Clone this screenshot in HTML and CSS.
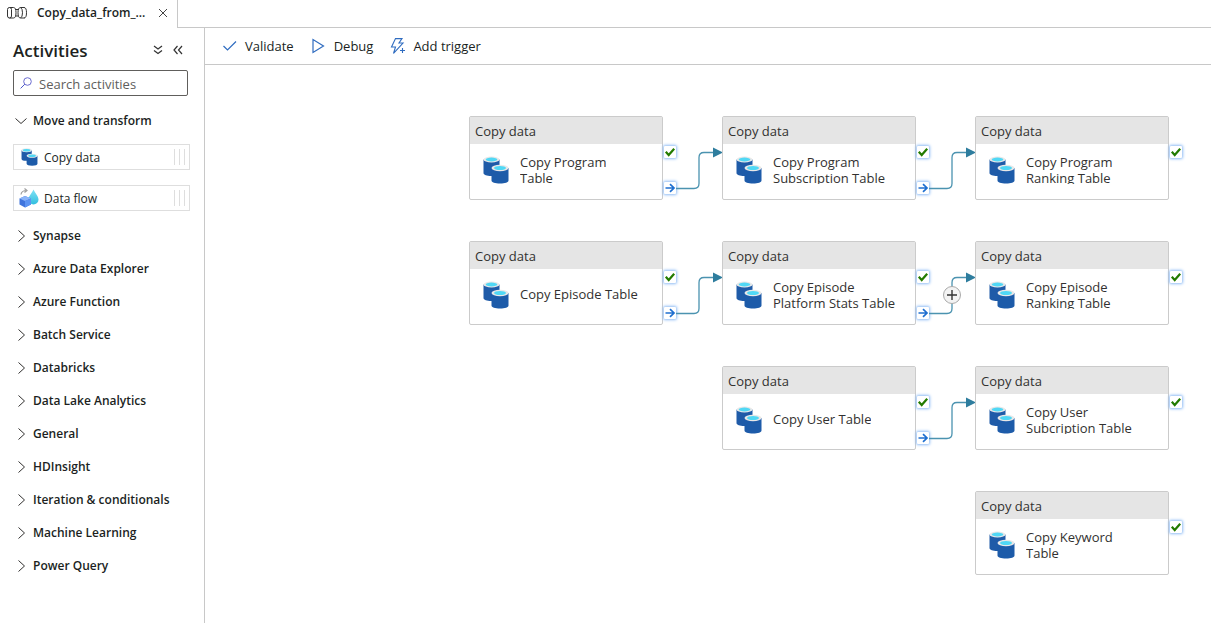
FILE: index.html
```html
<!DOCTYPE html>
<html lang="en">
<head>
<meta charset="utf-8">
<title>Copy_data_from_...</title>
<link rel="stylesheet" href="styles.css">
</head>
<body>
<svg class="sprite" aria-hidden="true">
  <defs>
    <linearGradient id="drop" x1="0" y1="0" x2="0" y2="1"><stop offset="0" stop-color="#7fe3f7"/><stop offset="1" stop-color="#32bedd"/></linearGradient>
    <symbol id="copy" viewBox="0 0 26 28">
      <path d="M0.500 3.500v13.500c0 2 3.500 3 7.500 3s8.500-1 8.500-3V3.500z" fill="#1f5ba8"/>
      <ellipse cx="8.500" cy="3.500" rx="8" ry="3" fill="#e8e8e8"/>
      <ellipse cx="8.500" cy="3.500" rx="5.800" ry="1.900" fill="#50d8f5"/>
      <path d="M8.500 12v12.500c0 2 3.500 3 8.500 3s8.500-1 8.500-3V12z" fill="#1d5ba9"/>
      <ellipse cx="17" cy="12" rx="8.500" ry="3.200" fill="#e8e8e8"/>
      <ellipse cx="17" cy="12" rx="6" ry="2" fill="#50d8f5"/>
    </symbol>
    <symbol id="right" viewBox="0 0 12 14"><path d="M2.500 1.500 8.500 7l-6 5.500" fill="none" stroke="#323130"/></symbol>
    <symbol id="tick" viewBox="0 0 12 12"><path d="M1.800 5.800 4.700 9 10.200 2.800" fill="none" stroke="#237b00" stroke-width="2.200"/></symbol>
    <symbol id="arrow" viewBox="0 0 12 12"><path d="M1.500 6h8.500M6 2.200l4 3.800-4 3.800" fill="none" stroke="#1f6fd0" stroke-width="1.700"/></symbol>
    <symbol id="link" viewBox="0 0 47 46"><path d="M0 41.500h18q5 0 5-5v-26q0-5 5-5h10" fill="none" stroke="#4b93b0" stroke-width="1.300"/><path d="M37 0.500 47 5.500 37 10.500z" fill="#2e7d9e"/></symbol>
  </defs>
</svg>
<div class="app">
  <header class="tabs">
    <div class="tab">
      <svg class="pipe" viewBox="0 0 20 14" fill="none" stroke="#333"><rect x="0.500" y="1.500" width="4" height="10.500" rx="2"/><path d="M2.500 1.500h4q2.500 0 2.500 5.250t-2.500 5.250h-4M8.500 3.500h3M8.500 10h3M17.500 1.500h-4q-2.500 0-2.500 5.250t2.500 5.250h4"/><path d="M13.500 1.500q2 1 2 5.250t-2 5.250M17 1.500q2.500 0 2.500 5.250t-2.500 5.250"/></svg>
      <span class="tab-name">Copy_data_from_...</span>
      <button class="icon-button" aria-label="Close tab"><svg class="close" viewBox="0 0 10 10"><path d="M1 1l8 8M9 1 1 9" stroke="#444" fill="none"/></svg></button>
    </div>
    <div class="tab-fill"></div>
  </header>
  <div class="workspace">
    <aside class="sidebar">
      <div class="side-head">
        <h1>Activities</h1>
        <button class="icon-button" aria-label="Expand all"><svg class="chevrons" viewBox="0 0 10 10"><path d="M1 1l4 3 4-3M1 5.500l4 3 4-3" fill="none" stroke="#333" stroke-width="1.200"/></svg></button>
        <button class="icon-button" aria-label="Collapse pane"><svg class="chevrons" viewBox="0 0 10 10"><path d="M4.500 1l-3.500 4 3.500 4M9 1 5.500 5 9 9" fill="none" stroke="#333" stroke-width="1.200"/></svg></button>
      </div>
      <label class="search">
        <svg class="glass" viewBox="0 0 12 12"><circle cx="7.500" cy="4.500" r="3.800" fill="none" stroke="#6b6bd0"/><path d="M4.800 7.200.6 11.400" stroke="#4a55c8"/></svg>
        <input type="search" placeholder="Search activities" aria-label="Search activities">
      </label>
      <button class="group" aria-expanded="true"><svg class="down" viewBox="0 0 14 8"><path d="M1.500 1.500 7 6.500l5.500-5" fill="none" stroke="#323130"/></svg>Move and transform</button>
      <ul class="cards">
        <li class="card"><svg class="card-icon" viewBox="0 0 26 28"><use href="#copy"/></svg><span>Copy data</span><i class="grip"></i></li>
        <li class="card"><svg class="card-icon wide" viewBox="0 0 20 20"><path d="M14.500 1.500c2.500 5 5 7 5 10a5 5 0 0 1-10 0c0-3 2.500-5 5-10z" fill="url(#drop)"/><path d="M.5 10.500 6 8l6 2.500v6L6 19.500l-5.500-3z" fill="#3f74dc"/><path d="M.5 10.500 6 8l6 2.500L6 13z" fill="#8bb5fa"/><path d="M6 13l6-2.500v6L6 19.500z" fill="#5b93f2"/><path d="M2 6.500q.5-4 5.500-4M5.500.5l2.500 2-2.500 2" fill="none" stroke="#a0a0a0" stroke-width="1.200"/></svg><span>Data flow</span><i class="grip"></i></li>
      </ul>
      <nav class="groups" aria-label="Activity groups">
        <button class="group"><svg class="chev"><use href="#right"/></svg>Synapse</button>
        <button class="group"><svg class="chev"><use href="#right"/></svg>Azure Data Explorer</button>
        <button class="group"><svg class="chev"><use href="#right"/></svg>Azure Function</button>
        <button class="group"><svg class="chev"><use href="#right"/></svg>Batch Service</button>
        <button class="group"><svg class="chev"><use href="#right"/></svg>Databricks</button>
        <button class="group"><svg class="chev"><use href="#right"/></svg>Data Lake Analytics</button>
        <button class="group"><svg class="chev"><use href="#right"/></svg>General</button>
        <button class="group"><svg class="chev"><use href="#right"/></svg>HDInsight</button>
        <button class="group"><svg class="chev"><use href="#right"/></svg>Iteration &amp; conditionals</button>
        <button class="group"><svg class="chev"><use href="#right"/></svg>Machine Learning</button>
        <button class="group"><svg class="chev"><use href="#right"/></svg>Power Query</button>
      </nav>
    </aside>
    <main class="main">
      <div class="toolbar">
        <button class="tool"><svg class="tool-icon" viewBox="0 0 16 16"><path d="M1.500 8l4 4 8.500-8.500" fill="none" stroke="#2f6cc0" stroke-width="1.200"/></svg>Validate</button>
        <button class="tool"><svg class="tool-icon" viewBox="0 0 16 16"><path d="M2 1.500v13L12.500 8z" fill="none" stroke="#2f6cc0" stroke-width="1.200"/></svg>Debug</button>
        <button class="tool"><svg class="tool-icon" viewBox="0 0 16 16"><path d="M5.500.6h6.500L9 5h4L3.500 15.400 5.500 9H1.500zM12.500 10v5M10 12.500h5" fill="none" stroke="#2f6cc0" stroke-width="1.100"/></svg>Add trigger</button>
      </div>
      <div class="canvas">
        <article class="node col-1 row-1"><h2>Copy data</h2><div class="node-body"><svg class="node-icon"><use href="#copy"/></svg><p>Copy Program<br>Table</p></div><svg class="port ok"><use href="#tick"/></svg><svg class="port out"><use href="#arrow"/></svg><svg class="link"><use href="#link"/></svg></article>
        <article class="node col-2 row-1"><h2>Copy data</h2><div class="node-body"><svg class="node-icon"><use href="#copy"/></svg><p>Copy Program Subscription Table</p></div><svg class="port ok"><use href="#tick"/></svg><svg class="port out"><use href="#arrow"/></svg><svg class="link"><use href="#link"/></svg></article>
        <article class="node col-3 row-1"><h2>Copy data</h2><div class="node-body"><svg class="node-icon"><use href="#copy"/></svg><p>Copy Program Ranking Table</p></div><svg class="port ok"><use href="#tick"/></svg></article>
        <article class="node col-1 row-2"><h2>Copy data</h2><div class="node-body"><svg class="node-icon"><use href="#copy"/></svg><p>Copy Episode Table</p></div><svg class="port ok"><use href="#tick"/></svg><svg class="port out"><use href="#arrow"/></svg><svg class="link"><use href="#link"/></svg></article>
        <article class="node col-2 row-2"><h2>Copy data</h2><div class="node-body"><svg class="node-icon"><use href="#copy"/></svg><p>Copy Episode Platform Stats Table</p></div><svg class="port ok"><use href="#tick"/></svg><svg class="port out"><use href="#arrow"/></svg><svg class="link"><use href="#link"/></svg><button class="add" aria-label="Add activity"><svg viewBox="0 0 16 16"><path d="M8 3v10M3 8h10" stroke="#333" stroke-width="1.400"/></svg></button></article>
        <article class="node col-3 row-2"><h2>Copy data</h2><div class="node-body"><svg class="node-icon"><use href="#copy"/></svg><p>Copy Episode Ranking Table</p></div><svg class="port ok"><use href="#tick"/></svg></article>
        <article class="node col-2 row-3"><h2>Copy data</h2><div class="node-body"><svg class="node-icon"><use href="#copy"/></svg><p>Copy User Table</p></div><svg class="port ok"><use href="#tick"/></svg><svg class="port out"><use href="#arrow"/></svg><svg class="link"><use href="#link"/></svg></article>
        <article class="node col-3 row-3"><h2>Copy data</h2><div class="node-body"><svg class="node-icon"><use href="#copy"/></svg><p>Copy User Subcription Table</p></div><svg class="port ok"><use href="#tick"/></svg></article>
        <article class="node col-3 row-4"><h2>Copy data</h2><div class="node-body"><svg class="node-icon"><use href="#copy"/></svg><p>Copy Keyword<br>Table</p></div><svg class="port ok"><use href="#tick"/></svg></article>
      </div>
    </main>
  </div>
</div>
</body>
</html>
```
FILE: styles.css
```css
* { box-sizing: border-box; }
body { margin: 0; background: #fff; color: #201f1e; font-family: "Segoe UI", "Open Sans", "Noto Sans", sans-serif; font-size: 13px; line-height: 16px; }
button { font: inherit; color: inherit; background: none; border: 0; padding: 0; }
svg { display: block; flex: none; }
h1, h2, p, ul { margin: 0; padding: 0; }
.sprite { position: absolute; width: 0; height: 0; }
.app { display: flex; flex-direction: column; min-height: 100vh; }
.tabs { display: flex; height: 28px; }
.tab { display: flex; align-items: center; width: 178px; padding: 0 9px 3px 7px; border-right: 1px solid #c8c8c8; font-size: 12px; font-weight: 600; }
.tab-fill { flex: 1; border-bottom: 1px solid #c8c8c8; }
.tab-name { flex: 1; padding-left: 10px; }
.pipe { width: 20px; height: 14px; }
.icon-button { display: flex; }
.close, .chevrons { width: 10px; height: 10px; }
.workspace { display: flex; flex: 1; }
.sidebar { width: 205px; flex: none; border-right: 1px solid #c8c8c8; padding: 10px 14px 0 13px; }
.side-head { display: flex; align-items: center; gap: 10px; height: 24px; padding-right: 7px; }
h1 { flex: 1; padding-top: 2px; font-size: 17px; line-height: 24px; font-weight: 600; }
.search { display: flex; align-items: center; gap: 7px; height: 26px; margin: 8px 2px 8px 0; padding: 0 6px; border: 1px solid #605e5c; border-radius: 2px; }
.glass { width: 12px; height: 12px; }
.search input { flex: 1; min-width: 0; border: 0; outline: 0; padding: 2px 0 0; font: inherit; background: none; }
.search input::placeholder { color: #605e5c; opacity: 1; }
.group { display: flex; align-items: center; width: 100%; height: 33px; font-size: 12px; font-weight: 600; text-align: left; white-space: nowrap; }
.down { width: 14px; height: 8px; margin: 0 5px 0 1px; }
.chev { width: 12px; height: 14px; margin: 0 5px 0 3px; }
.cards { display: grid; gap: 15px; margin: 7px 0 8px; list-style: none; }
.card { display: flex; align-items: center; height: 26px; padding: 0 4px 0 7px; border: 1px solid #dedede; font-size: 12px; }
.card-icon { width: 17px; height: 18px; }
.card span { flex: 1; padding: 2px 0 0 6px; }
.wide { width: 20px; height: 20px; margin-left: -2px; margin-right: -1px; }
.grip { width: 11px; height: 16px; border: solid #dedede; border-width: 0 1px; background: linear-gradient(#dedede, #dedede) center / 1px 100% no-repeat; }
.main { display: flex; flex: 1; flex-direction: column; min-width: 0; }
.toolbar { display: flex; align-items: center; gap: 17px; height: 37px; padding-left: 17px; border-bottom: 1px solid #c8c8c8; }
.tool { display: flex; align-items: center; gap: 7px; }
.tool-icon { width: 16px; height: 16px; }
.canvas { position: relative; flex: 1; min-height: 520px; }
.node { position: absolute; width: 194px; height: 84px; border: 1px solid #cbcbcb; border-radius: 2px; color: #323130; }
.col-1 { left: 264px; }
.col-2 { left: 517px; }
.col-3 { left: 770px; }
.row-1 { top: 51px; }
.row-2 { top: 176px; }
.row-3 { top: 301px; }
.row-4 { top: 426px; }
h2 { height: 27px; padding: 0 5px; background: #e5e5e5; font-size: 13px; font-weight: 400; line-height: 28px; }
.node-body { display: flex; align-items: center; gap: 11px; height: 54px; padding: 0 13px; }
.node-icon { width: 26px; height: 28px; margin-bottom: 2px; }
.node p { max-width: 132px; max-height: 30px; margin-bottom: 4px; overflow: hidden; }
.port { position: absolute; left: 194px; width: 12px; height: 12px; background: #fff; border-radius: 1px; box-shadow: 0 0 3px 1px #8fbcf5; }
.ok { top: 29px; }
.out { top: 65px; }
.link { position: absolute; left: 206px; top: 30px; width: 47px; height: 46px; }
.add { position: absolute; left: 220px; top: 44px; width: 18px; height: 18px; border: 1px solid #aaa; border-radius: 50%; background: #f3f3f3; }
```
